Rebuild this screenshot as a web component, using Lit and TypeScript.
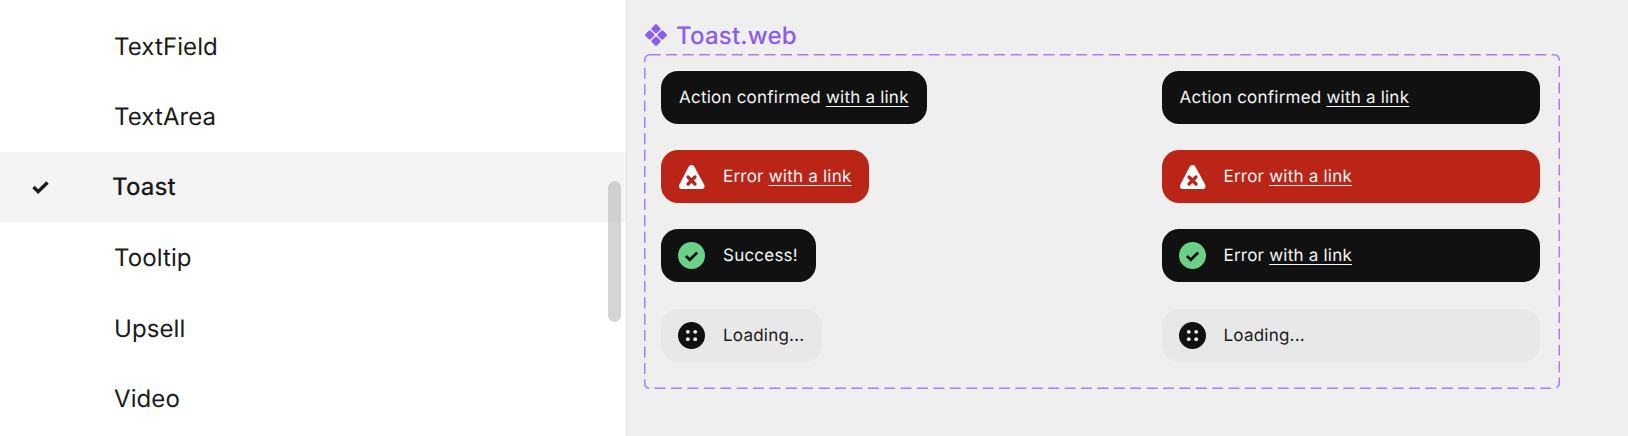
import { LitElement, html, css, nothing, type TemplateResult } from 'lit';
import { customElement } from 'lit/decorators.js';

const ITEMS = ['TextField', 'TextArea', 'Toast', 'Tooltip', 'Upsell', 'Video'];

const errorIcon = html`<svg class="icon" viewBox="0 0 27 27">
  <path d="M13.5 2c1.3 0 2.3.7 3 1.9l9.6 17.6c1.1 2.2-.1 4.6-2.5 4.6H3.9c-2.4 0-3.6-2.4-2.5-4.6l9.1-17.6c.7-1.2 1.7-1.9 3-1.9z" fill="#fff"/>
  <path d="M10 14l7 7M17 14l-7 7" stroke="#ba2518" stroke-width="3.2" stroke-linecap="round"/>
</svg>`;

const successIcon = html`<svg class="icon" viewBox="0 0 27 27">
  <circle cx="13.5" cy="13.5" r="13.5" fill="#6bd088"/>
  <path d="M7.9 14l3.9 3.8 7.4-7.4" fill="none" stroke="#111" stroke-width="2.8"/>
</svg>`;

const loadingIcon = html`<svg class="icon" viewBox="0 0 27 27">
  <circle cx="13.5" cy="13.5" r="13.5" fill="#111"/>
  <g fill="#eee">
    <circle cx="9.8" cy="9.8" r="1.9"/><circle cx="17.2" cy="9.8" r="1.9"/>
    <circle cx="9.8" cy="17.2" r="1.9"/><circle cx="17.2" cy="17.2" r="1.9"/>
  </g>
</svg>`;

type Kind = 'dark' | 'error' | 'loading';

interface ToastDef {
  kind: Kind;
  icon?: TemplateResult;
  text: string;
  link?: string;
}

// left column hugs its text, right column is fixed width
const ROWS: Array<[ToastDef, ToastDef]> = [
  [
    { kind: 'dark', text: 'Action confirmed ', link: 'with a link' },
    { kind: 'dark', text: 'Action confirmed ', link: 'with a link' },
  ],
  [
    { kind: 'error', icon: errorIcon, text: 'Error ', link: 'with a link' },
    { kind: 'error', icon: errorIcon, text: 'Error ', link: 'with a link' },
  ],
  [
    { kind: 'dark', icon: successIcon, text: 'Success!' },
    { kind: 'dark', icon: successIcon, text: 'Error ', link: 'with a link' },
  ],
  [
    { kind: 'loading', icon: loadingIcon, text: 'Loading...' },
    { kind: 'loading', icon: loadingIcon, text: 'Loading...' },
  ],
];

@customElement('app-root')
export class AppRoot extends LitElement {
  static styles = css`
    :host {
      display: flex;
      width: 1628px;
      height: 436px;
      overflow: hidden;
      background: #efefef;
      font-family: Inter, 'Liberation Sans', sans-serif;
      color: #1a1a1a;
      text-rendering: geometricPrecision;
    }
    .sidebar {
      position: relative;
      box-sizing: border-box;
      width: 627px;
      height: 436px;
      flex: none;
      overflow: hidden;
      background: #fff;
      border-right: 1px solid #e3e3e3;
      padding-top: 10.8px;
    }
    .row {
      display: flex;
      align-items: center;
      height: 70.5px;
      padding-left: 114px;
      font-size: 24px;
      letter-spacing: 0.1px;
    }
    .row.selected {
      box-sizing: border-box;
      background: #f4f4f4;
      padding-left: 112px;
      padding-bottom: 1.5px;
      font-weight: 500;
      position: relative;
    }
    .check {
      position: absolute;
      left: 32px;
      top: 28px;
      width: 17px;
      height: 14px;
    }
    .scrollbar {
      position: absolute;
      left: 608px;
      top: 181px;
      width: 13px;
      height: 141px;
      border-radius: 7px;
      background: rgba(170, 170, 170, 0.48);
    }
    .canvas {
      flex: 1;
      display: flex;
      flex-direction: column;
      padding: 21px 0 0 17px;
    }
    .title {
      display: flex;
      align-items: center;
      gap: 8px;
      height: 28px;
      margin-bottom: 5px;
      font-size: 24px;
      font-weight: 500;
      letter-spacing: 0.2px;
      color: #8b5cf0;
    }
    .title svg {
      width: 24px;
      height: 24px;
    }
    .frame {
      position: relative;
      box-sizing: border-box;
      width: 916px;
      height: 335px;
      padding: 17px 20px 0 17px;
      display: grid;
      grid-template-columns: 500.5px 378px;
      grid-auto-rows: 53px;
      row-gap: 26.2px;
    }
    .dashes {
      position: absolute;
      left: 0;
      top: 0;
      width: 916px;
      height: 335px;
    }
    .toast {
      display: flex;
      align-items: center;
      gap: 18px;
      box-sizing: border-box;
      height: 53px;
      padding: 0 18px;
      border-radius: 17px;
      font-size: 17px;
      letter-spacing: 0.22px;
      white-space: pre;
      color: #f5f5f5;
    }
    .toast span {
      padding-top: 1px;
    }
    .has-icon {
      padding-left: 17px;
    }
    .col-a {
      justify-self: start;
    }
    .dark {
      background: #111111;
    }
    .error {
      background: #ba2518;
    }
    .loading {
      background: #e8e8e8;
      color: #1a1a1a;
    }
    .icon {
      width: 27px;
      height: 27px;
      flex: none;
    }
    .link {
      text-decoration: underline;
      text-underline-offset: 3px;
      text-decoration-thickness: 1px;
    }
  `;

  private _toast(t: ToastDef, colClass: string): TemplateResult {
    return html`<div class="toast ${t.kind} ${colClass} ${t.icon ? 'has-icon' : ''}">
      ${t.icon ?? nothing}
      <span>${t.text}${t.link ? html`<span class="link">${t.link}</span>` : nothing}</span>
    </div>`;
  }

  protected render(): TemplateResult {
    return html`
      <div class="sidebar">
        ${ITEMS.map((item) =>
          item === 'Toast'
            ? html`<div class="row selected">
                <svg class="check" viewBox="0 0 17 14">
                  <path d="M1.5 7l4.6 4.6L15.5 2.5" fill="none" stroke="#1a1a1a" stroke-width="3.4"/>
                </svg>
                ${item}
              </div>`
            : html`<div class="row">${item}</div>`
        )}
        <div class="scrollbar"></div>
      </div>
      <div class="canvas">
        <div class="title">
          <svg viewBox="0 0 24 24" fill="#8b5cf0">
            <rect x="8.3" y="2.1" width="7.4" height="7.4" rx="1.3" transform="rotate(45 12 5.8)"/>
            <rect x="8.3" y="14.5" width="7.4" height="7.4" rx="1.3" transform="rotate(45 12 18.2)"/>
            <rect x="2.1" y="8.3" width="7.4" height="7.4" rx="1.3" transform="rotate(45 5.8 12)"/>
            <rect x="14.5" y="8.3" width="7.4" height="7.4" rx="1.3" transform="rotate(45 18.2 12)"/>
          </svg>
          Toast.web
        </div>
        <div class="frame">
          <svg class="dashes" viewBox="0 0 916 335">
            <rect x="0.75" y="0.75" width="914.5" height="333.5" rx="5" fill="none"
              stroke="#a67ffa" stroke-width="1.5" stroke-dasharray="11 5.4"/>
          </svg>
          ${ROWS.map(
            ([a, b]) => html`${this._toast(a, 'col-a')}${this._toast(b, '')}`
          )}
        </div>
      </div>
    `;
  }
}
